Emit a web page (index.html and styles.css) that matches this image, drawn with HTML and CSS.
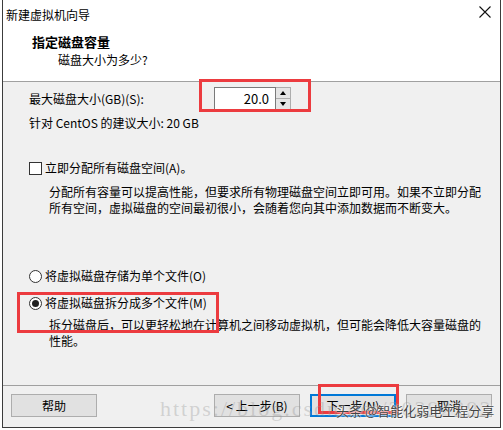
FILE: index.html
```html
<!DOCTYPE html>
<html lang="zh-CN">
<head>
    <meta charset="UTF-8">
    <title>新建虚拟机向导</title>
    <link rel="stylesheet" href="styles.css">
</head>
<body>
    <div class="window">
        <div class="titlebar">
            <span class="title">新建虚拟机向导</span>
            <svg class="close" width="12" height="12" viewBox="0 0 12 12">
                <path d="M0.5 0.5 L11.5 11.5 M11.5 0.5 L0.5 11.5" stroke="#111" stroke-width="1.1" fill="none"/>
            </svg>
        </div>
        <div class="header">
            <div class="heading">指定磁盘容量</div>
            <div class="subheading">磁盘大小为多少?</div>
        </div>
        <div class="content">
            <div class="size-row">
                <span>最大磁盘大小(GB)(S):</span>
                <div class="spinner">
                    <div class="spin-input">20.0</div>
                    <div class="spin-btns">
                        <div class="spin-btn"><i class="arrow-up"></i></div>
                        <div class="spin-btn"><i class="arrow-down"></i></div>
                    </div>
                </div>
            </div>
            <div class="hint">针对 CentOS 的建议大小: 20 GB</div>
            <div class="option check-row">
                <span class="checkbox"></span>
                <span>立即分配所有磁盘空间(A)。</span>
            </div>
            <p class="desc">分配所有容量可以提高性能，但要求所有物理磁盘空间立即可用。如果不立即分配所有空间，虚拟磁盘的空间最初很小，会随着您向其中添加数据而不断变大。</p>
            <div class="option radio-row first">
                <span class="radio"></span>
                <span>将虚拟磁盘存储为单个文件(O)</span>
            </div>
            <div class="option radio-row">
                <span class="radio checked"></span>
                <span>将虚拟磁盘拆分成多个文件(M)</span>
            </div>
            <p class="desc short">拆分磁盘后，可以更轻松地在计算机之间移动虚拟机，但可能会降低大容量磁盘的性能。</p>
        </div>
        <div class="footer">
            <button class="btn">帮助</button>
            <div class="spacer"></div>
            <button class="btn">&lt; 上一步(B)</button>
            <button class="btn primary">下一步(N)</button>
            <button class="btn">取消</button>
        </div>
    </div>

    <div class="mark mark-size"></div>
    <div class="mark mark-split"></div>
    <div class="mark mark-next"></div>
    <div class="watermark-url">https://blog.csdn.net/20292292</div>
    <div class="watermark-tt">头条 @智能化弱电工程分享</div>
</body>
</html>
```

FILE: styles.css
```css
body {
    margin: 0;
    background: #fff;
    font-family: "Noto Sans CJK SC", "Microsoft YaHei", sans-serif;
    font-size: 12px;
    color: #000;
    position: relative;
}
.window {
    margin-left: 2px;
    width: 497px;
    height: 427px;
    border: 1px solid #3c3c3c;
    border-top: none;
    display: flex;
    flex-direction: column;
    background: #f0f0f0;
}
.titlebar {
    height: 30px;
    background: #fff;
    display: flex;
    align-items: center;
    justify-content: space-between;
    padding: 0 9px 0 3px;
}
.title {
    margin-top: -2px;
}
.close {
    margin-top: -6px;
}
.header {
    height: 51px;
    background: #fff;
    border-bottom: 1px solid #a0a0a0;
    padding-left: 29px;
}
.heading {
    font-weight: bold;
    font-size: 13px;
    line-height: 18px;
    margin-top: 3px;
}
.subheading {
    line-height: 16px;
    padding-left: 26px;
    margin-top: 1px;
}
.content {
    flex: 1;
    padding: 5px 0 0 26px;
}
.size-row {
    display: flex;
    align-items: center;
    height: 23px;
}
.size-row span {
    width: 185px;
}
.spinner {
    display: flex;
    height: 23px;
}
.spin-input {
    width: 54px;
    height: 21px;
    border: 1px solid #7a7a7a;
    background: #fff;
    text-align: right;
    padding-right: 6px;
    line-height: 21px;
    font-size: 13px;
}
.spin-btns {
    display: flex;
    flex-direction: column;
    width: 15px;
    border: 1px solid #adadad;
    border-left: none;
    box-sizing: border-box;
}
.spin-btn {
    flex: 1;
    background: #e5e5e5;
    display: flex;
    align-items: center;
    justify-content: center;
}
.spin-btn + .spin-btn {
    border-top: 1px solid #adadad;
}
.arrow-up,
.arrow-down {
    display: block;
    width: 0;
    height: 0;
    border-left: 3px solid transparent;
    border-right: 3px solid transparent;
}
.arrow-up {
    border-bottom: 4px solid #000;
}
.arrow-down {
    border-top: 4px solid #000;
}
.hint {
    margin-top: 5px;
    line-height: 16px;
}
.option {
    display: flex;
    align-items: center;
    line-height: 16px;
}
.check-row {
    margin-top: 29px;
    gap: 3px;
}
.checkbox {
    width: 11px;
    height: 11px;
    border: 1px solid #333;
    background: #fff;
}
.desc {
    margin: 8px 0 0 20px;
    width: 433px;
    line-height: 16px;
}
.radio-row {
    gap: 3px;
}
.radio-row.first {
    margin-top: 52px;
}
.radio-row + .radio-row {
    margin-top: 11px;
}
.radio {
    width: 11px;
    height: 11px;
    border: 1px solid #333;
    border-radius: 50%;
    background: #fff;
    display: flex;
    align-items: center;
    justify-content: center;
}
.radio.checked::after {
    content: "";
    width: 7px;
    height: 7px;
    border-radius: 50%;
    background: #222;
}
.desc.short {
    margin-top: 6px;
    width: 440px;
}
.footer {
    height: 39px;
    border-top: 1px solid #a0a0a0;
    display: flex;
    align-items: center;
    gap: 10px;
    padding: 0 8px 2px 8px;
}
.spacer {
    flex: 1;
}
.btn {
    width: 86px;
    height: 23px;
    border: 1px solid #adadad;
    background: #e1e1e1;
    font-family: inherit;
    font-size: 12px;
    padding: 0;
    color: #000;
}
.btn.primary {
    border: 2px solid #0078d7;
}
.mark {
    position: absolute;
    border: 3px solid #ec3b3f;
}
.mark-size {
    left: 199px;
    top: 79px;
    width: 106px;
    height: 27px;
}
.mark-split {
    left: 17px;
    top: 292px;
    width: 196px;
    height: 35px;
}
.mark-next {
    left: 318px;
    top: 384px;
    width: 75px;
    height: 24px;
}
.watermark-url {
    position: absolute;
    left: 160px;
    top: 396px;
    font-family: "Liberation Serif", serif;
    font-size: 22px;
    letter-spacing: 2px;
    color: rgba(150, 150, 150, 0.35);
    white-space: nowrap;
}
.watermark-tt {
    position: absolute;
    left: 336px;
    top: 401px;
    font-size: 13px;
    color: #444;
    text-shadow: 0 0 2px #fff, 0 0 2px #fff;
    white-space: nowrap;
}
```
